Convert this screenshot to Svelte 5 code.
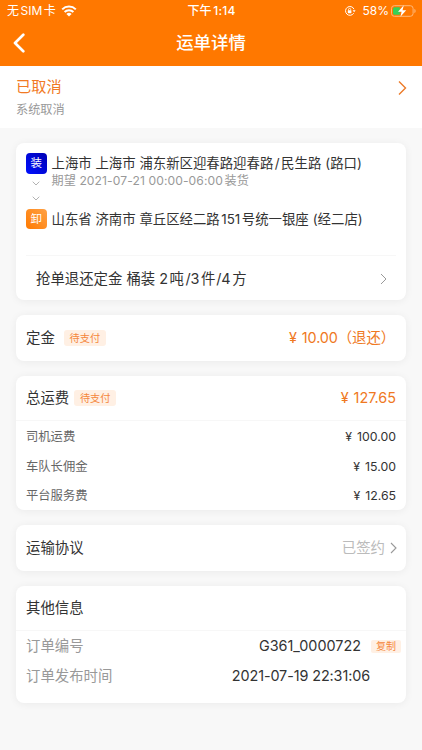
<script>
  let fees = [
    { label: '司机运费', amount: '100.00' },
    { label: '车队长佣金', amount: '15.00' },
    { label: '平台服务费', amount: '12.65' }
  ]

  let orderNo = 'G361_0000722'
  let publishTime = '2021-07-19 22:31:06'
</script>

<div class="page">
  <header>
    <div class="status-bar">
      <div class="carrier">
        <span>无<i class="thin"></i>SIM<i class="thin"></i>卡</span>
        <svg class="wifi" viewBox="0 0 16 12" width="16" height="12">
          <path d="M1.2 4.4a9.7 9.7 0 0 1 13.6 0M3.6 7a6.3 6.3 0 0 1 8.8 0" fill="none" stroke="#fff" stroke-width="2" />
          <path d="M8 11.6 5.4 9a3.7 3.7 0 0 1 5.2 0z" fill="#fff" />
        </svg>
      </div>
      <div class="clock">下午<i class="thin"></i>1:14</div>
      <div class="power">
        <svg viewBox="0 0 12 12" width="12" height="12">
          <path d="M9.7 8.2A4.4 4.4 0 1 1 10 4.2" fill="none" stroke="#fff" stroke-width="1" />
          <path d="M8.6 5.2h3l-1.5 2z" fill="#fff" />
          <rect x="3.8" y="5.3" width="3.6" height="2.9" rx="0.4" fill="#fff" />
          <path d="M4.5 5.4v-.9a1.1 1.1 0 0 1 2.2 0v.9" fill="none" stroke="#fff" stroke-width="0.8" />
        </svg>
        <span class="percent">58%</span>
        <svg class="battery" viewBox="0 0 25 12" width="25" height="12">
          <rect x="0.5" y="0.7" width="21.6" height="10.6" rx="2.8" fill="none" stroke="#ffb878" />
          <path d="M23.4 4v4c.8-.3 1.2-1 1.2-2s-.4-1.7-1.2-2z" fill="#ffb878" />
          <path d="M3.5 2.2h5.3v7.6H3.500A1.500 1.500 0 0 1 2 8.300V3.700a1.500 1.500 0 0 1 1.500-1.500z" fill="#33d158" />
          <path d="M12.8.3 7 6.7h3.6l-1.200 5 5.800-6.500h-3.700z" fill="#fff" />
        </svg>
      </div>
    </div>
    <div class="nav-bar">
      <button class="back" aria-label="返回">
        <svg viewBox="0 0 12 20" width="12" height="20">
          <path d="M10.3 1.8 2 10l8.3 8.2" fill="none" stroke="#fff" stroke-width="2.7" stroke-linecap="round" stroke-linejoin="round" />
        </svg>
      </button>
      <h1>运单详情</h1>
    </div>
  </header>

  <section class="state">
    <div>
      <div class="state-title">已取消</div>
      <div class="state-reason">系统取消</div>
    </div>
    <svg class="state-arrow" viewBox="0 0 9 16" width="9" height="16">
      <path d="M1 1.500 7.500 8 1 14.500" fill="none" stroke="#ec7a28" stroke-width="1.4" />
    </svg>
  </section>

  <main>
    <section class="card route">
      <div class="stops">
        <div class="rail">
          <span class="mark load">装</span>
          <svg class="down first" viewBox="0 0 8 5" width="8" height="5"><path d="M.7.7 4 4 7.3.7" fill="none" stroke="#aaa" stroke-width="0.9" /></svg>
          <svg class="down" viewBox="0 0 8 5" width="8" height="5"><path d="M.7.7 4 4 7.3.7" fill="none" stroke="#aaa" stroke-width="0.9" /></svg>
          <span class="mark unload">卸</span>
        </div>
        <div class="places">
          <div class="place from">上海市 上海市 浦东新区迎春路迎春路<i class="thin"></i>/<i class="thin"></i>民生路<i class="gap"></i>(路口)</div>
          <div class="time">期望 2021-07-21 00:00-06:00<i class="thin"></i>装货</div>
          <div class="place to">山东省 济南市 章丘区经二路<i class="thin"></i>151<i class="thin"></i>号统一银座<i class="gap"></i>(经二店)</div>
        </div>
      </div>
      <div class="goods">
        <span>抢单退还定金 桶装 2<i class="thin"></i>吨<i class="thin"></i>/3<i class="thin"></i>件<i class="hair"></i>/4<i class="thin"></i>方</span>
        <svg viewBox="0 0 7 12" width="7" height="12"><path d="M1 1 6 6 1 11" fill="none" stroke="#999" stroke-width="1" /></svg>
      </div>
    </section>

    <section class="card line deposit">
      <span class="title">定金</span>
      <span class="tag">待支付</span>
      <span class="price"><span class="yen">¥</span>10.00<span class="refund">（退还）</span></span>
    </section>

    <section class="card freight">
      <div class="line total">
        <span class="title">总运费</span>
        <span class="tag">待支付</span>
        <span class="price"><span class="yen">¥</span>127.65</span>
      </div>
      <div class="fees">
        {#each fees as fee}
          <div class="fee">
            <span>{fee.label}</span>
            <span class="amount"><span class="yen">¥</span>{fee.amount}</span>
          </div>
        {/each}
      </div>
    </section>

    <section class="card line agreement">
      <span class="title">运输协议</span>
      <span class="signed">已签约</span>
      <svg viewBox="0 0 7 12" width="7" height="12"><path d="M1 1 6 6 1 11" fill="none" stroke="#999" stroke-width="1.1" /></svg>
    </section>

    <section class="card other">
      <div class="line head"><span class="title">其他信息</span></div>
      <div class="info">
        <span class="label">订单编号</span>
        <span class="value">{orderNo}</span>
        <button class="copy">复制</button>
      </div>
      <div class="info">
        <span class="label">订单发布时间</span>
        <span class="value publish">{publishTime}</span>
      </div>
    </section>
  </main>
</div>

<style>
  :global(body) {
    margin: 0;
    background: #f8f8f8;
  }

  .page {
    width: 422px;
    height: 750px;
    overflow: hidden;
    background: #f8f8f8;
    color: #333;
    font-family: Inter, 'Noto Sans CJK SC', sans-serif;
    font-size: 14.4px;
    line-height: 20px;
    white-space: nowrap;
  }

  button {
    padding: 0;
    border: none;
    background: none;
    font-family: inherit;
  }

  svg {
    display: block;
    flex: none;
  }

  .hair {
    display: inline-block;
    width: 0.8px;
  }

  .thin {
    display: inline-block;
    width: 1.5px;
  }

  .gap {
    display: inline-block;
    width: 4px;
  }

  header {
    height: 66px;
    background: #ff7800;
    color: #fff;
  }

  .status-bar {
    display: grid;
    grid-template-columns: 1fr auto 1fr;
    height: 22px;
    padding: 0 6px 0 7px;
    font-size: 12px;
    line-height: 22px;
  }

  .carrier,
  .power {
    display: flex;
    align-items: center;
  }

  .wifi {
    margin-left: 5px;
  }

  .clock {
    font-weight: 500;
    letter-spacing: 0.2px;
  }

  .power {
    justify-content: flex-end;
  }

  .percent {
    margin: 0 2px 0 6px;
  }

  .nav-bar {
    display: grid;
    grid-template-columns: 1fr auto 1fr;
    align-items: center;
    height: 42px;
    padding: 0 13px;
  }

  .back {
    width: 12px;
  }

  h1 {
    margin: 0;
    font-size: 17.4px;
    font-weight: 500;
    line-height: 24px;
  }

  .state {
    display: flex;
    justify-content: space-between;
    box-sizing: border-box;
    height: 62px;
    padding: 11px 15px 0 16px;
    background: #fff;
  }

  .state-title {
    color: #f17a24;
    font-size: 15.2px;
  }

  .state-reason {
    margin-top: 3px;
    color: #999;
    font-size: 12.2px;
  }

  .state-arrow {
    margin-top: 3px;
  }

  main {
    display: flex;
    flex-direction: column;
    gap: 15.3px;
    padding: 15px 16px;
  }

  .card {
    box-sizing: border-box;
    border-radius: 8px;
    background: #fff;
    box-shadow: 0 1px 8px rgba(0, 0, 0, 0.06);
  }

  .route {
    height: 156.7px;
    padding: 0 10px;
  }

  .stops {
    display: flex;
    gap: 5px;
    box-sizing: border-box;
    height: 113px;
    padding-top: 10px;
    border-bottom: 1px solid #f7f7f7;
  }

  .rail {
    display: flex;
    flex-direction: column;
    align-items: center;
    width: 20.5px;
  }

  .mark {
    width: 20.5px;
    height: 20.5px;
    border-radius: 4px;
    color: #fff;
    font-size: 11.5px;
    line-height: 20px;
    text-align: center;
  }

  .load {
    background: linear-gradient(225deg, #0000b4, #0010ff);
  }

  .unload {
    margin-top: 8px;
    background: linear-gradient(45deg, #ff7a00, #ffa145);
  }

  .down {
    margin-top: 10px;
  }

  .down.first {
    margin-top: 7px;
  }

  .place {
    color: #333;
    font-size: 13.4px;
  }

  .time {
    height: 17px;
    margin-top: -1px;
    color: #999;
    font-size: 12.1px;
    letter-spacing: 0.1px;
    line-height: 17px;
  }

  .to {
    margin-top: 20px;
  }

  .goods {
    display: flex;
    align-items: center;
    justify-content: space-between;
    box-sizing: border-box;
    height: 44px;
    padding: 2px 9px 0 10px;
  }

  .line {
    display: flex;
    align-items: center;
    padding: 0 10px;
  }

  .deposit {
    height: 46px;
    padding-right: 11px;
  }

  .tag {
    box-sizing: border-box;
    width: 42px;
    height: 16px;
    margin-left: 9px;
    border-radius: 3px;
    background: #fff0e4;
    color: #f5873c;
    font-size: 10.2px;
    line-height: 16px;
    text-align: center;
  }

  .total .tag {
    margin-left: 5px;
  }

  .price {
    margin-left: auto;
    color: #ef7822;
  }

  .deposit .price {
    letter-spacing: -0.1px;
  }

  .yen {
    margin-right: 5px;
  }

  .freight {
    height: 133.5px;
  }

  .total {
    box-sizing: border-box;
    height: 45px;
    border-bottom: 1px solid #f7f7f7;
  }

  .fees {
    padding: 1px 10px 0;
  }

  .fee {
    display: flex;
    align-items: center;
    justify-content: space-between;
    height: 29.5px;
    color: #666;
    font-size: 12.3px;
  }

  .amount {
    color: #333;
  }

  .agreement {
    height: 46px;
    padding-right: 9px;
  }

  .signed {
    margin: 0 5px 0 auto;
    color: #bbb;
  }

  .other {
    height: 117px;
  }

  .head {
    box-sizing: border-box;
    height: 45px;
    border-bottom: 1px solid #f7f7f7;
  }

  .info {
    display: flex;
    align-items: center;
    height: 29.5px;
    padding: 0 5px 0 10px;
  }

  .label {
    color: #999;
  }

  .value {
    margin-left: auto;
  }

  .publish {
    margin-right: 31px;
    letter-spacing: -0.1px;
  }

  .copy {
    width: 30px;
    height: 13px;
    margin-left: 10px;
    border-radius: 2px;
    background: #fff0e4;
    color: #f5873c;
    font-size: 10px;
    line-height: 13px;
  }
</style>
